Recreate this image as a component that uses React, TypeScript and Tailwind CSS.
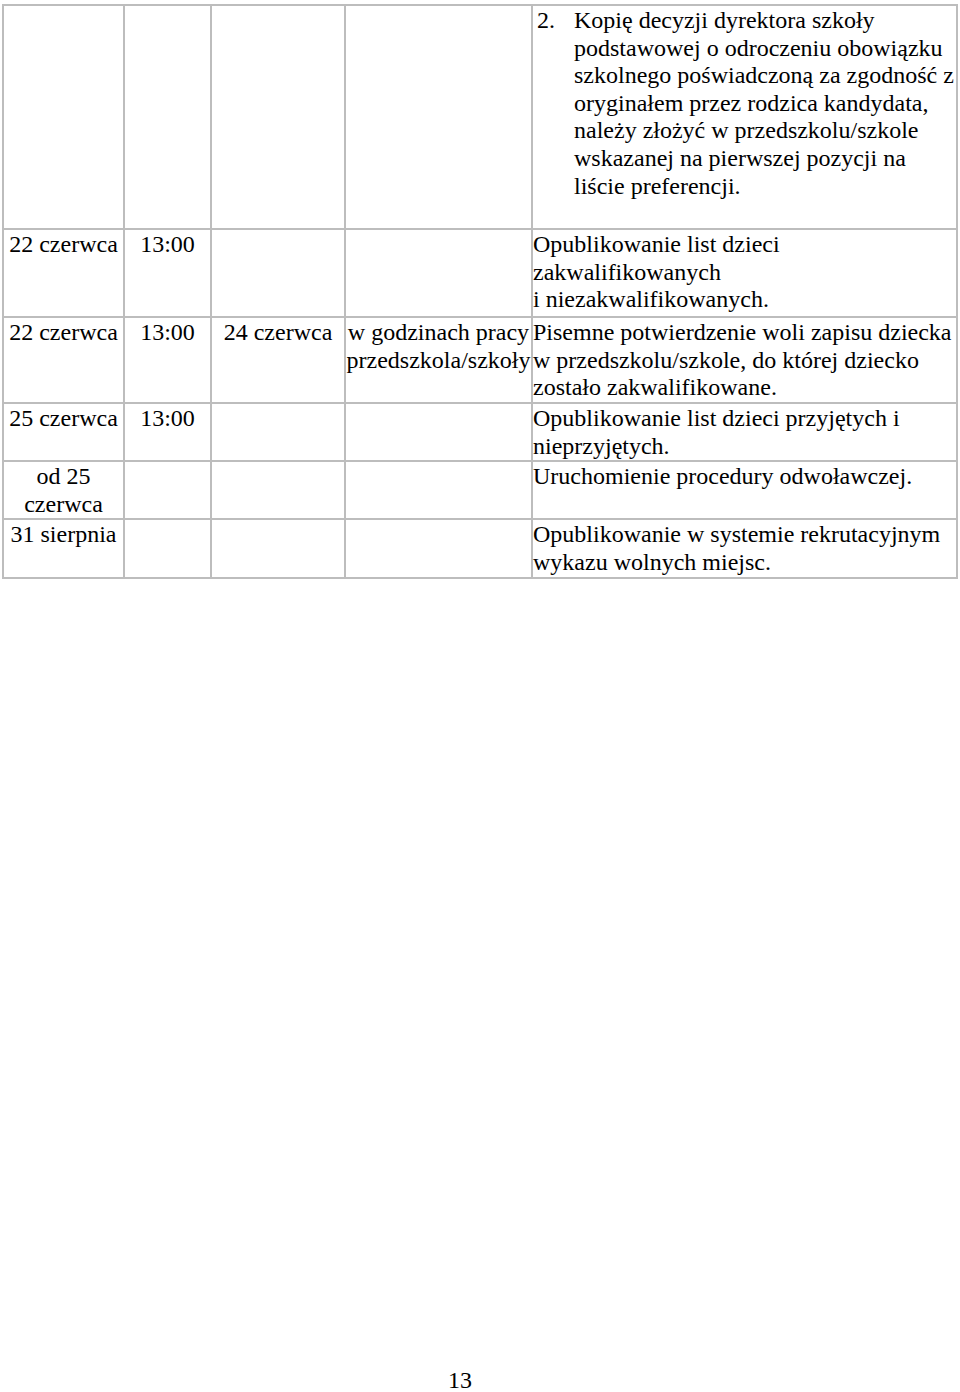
const serif = { fontFamily: '"Liberation Serif", "Times New Roman", serif' };

type Row = {
  date: React.ReactNode;
  time?: string;
  until?: string;
  hours?: React.ReactNode;
  text: React.ReactNode;
};

const rows: Row[] = [
  {
    date: "22 czerwca",
    time: "13:00",
    text: (
      <>
        Opublikowanie list dzieci
        <br />
        zakwalifikowanych
        <br />i niezakwalifikowanych.
      </>
    ),
  },
  {
    date: "22 czerwca",
    time: "13:00",
    until: "24 czerwca",
    hours: (
      <>
        w godzinach pracy
        <br />
        przedszkola/szkoły
      </>
    ),
    text: (
      <>
        Pisemne potwierdzenie woli zapisu dziecka
        <br />w przedszkolu/szkole, do której dziecko
        <br />
        zostało zakwalifikowane.
      </>
    ),
  },
  {
    date: "25 czerwca",
    time: "13:00",
    text: (
      <>
        Opublikowanie list dzieci przyjętych i
        <br />
        nieprzyjętych.
      </>
    ),
  },
  {
    date: (
      <>
        od 25
        <br />
        czerwca
      </>
    ),
    text: "Uruchomienie procedury odwoławczej.",
  },
  {
    date: "31 sierpnia",
    text: (
      <>
        Opublikowanie w systemie rekrutacyjnym
        <br />
        wykazu wolnych miejsc.
      </>
    ),
  },
];

const cell = "bg-white pt-px leading-[27.6px] whitespace-nowrap";

export default function App() {
  return (
    <div className="h-[1392px] overflow-hidden bg-white text-[24px] text-black" style={serif}>
      {/* Schedule table */}
      <div className="ml-[2px] mt-[4px] grid w-[956px] grid-cols-[119px_85px_132px_185px_423px] grid-rows-[222px_86px_84px_56px_56px_57px] gap-[2px] bg-[#bdbdbd] p-[2px]">
        <div className={cell} />
        <div className={cell} />
        <div className={cell} />
        <div className={cell} />
        <div className={`${cell} flex`}>
          <span className="w-[41px] shrink-0 pl-[4px]">2.</span>
          <span>
            Kopię decyzji dyrektora szkoły
            <br />
            podstawowej o odroczeniu obowiązku
            <br />
            szkolnego poświadczoną za zgodność z
            <br />
            oryginałem przez rodzica kandydata,
            <br />
            należy złożyć w przedszkolu/szkole
            <br />
            wskazanej na pierwszej pozycji na
            <br />
            liście preferencji.
          </span>
        </div>

        {rows.map((r, i) => (
          <div key={i} className="contents">
            <div className={`${cell} text-center`}>{r.date}</div>
            <div className={`${cell} text-center`}>{r.time}</div>
            <div className={`${cell} text-center`}>{r.until}</div>
            <div className={`${cell} text-center`}>{r.hours}</div>
            <div className={cell}>{r.text}</div>
          </div>
        ))}
      </div>

      {/* Page number */}
      <div className="mt-[788px] pl-[448px] leading-[27.6px]">13</div>
    </div>
  );
}
